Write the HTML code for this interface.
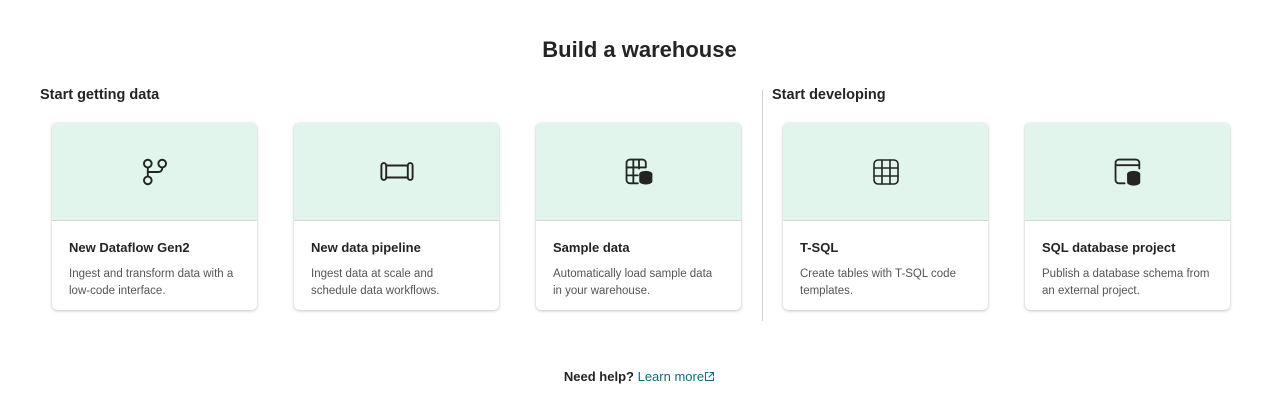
<!DOCTYPE html>
<html><head><meta charset="utf-8"><style>
body{margin:0;width:1279px;height:420px;background:#fff;font-family:"Liberation Sans",sans-serif;color:#242424;position:relative;overflow:hidden}
h1{position:absolute;top:37px;left:0;width:1279px;text-align:center;margin:0;font-size:22px;font-weight:600}
.sec{position:absolute;top:87px;font-size:14.5px;font-weight:600}
.div{position:absolute;left:762px;top:90px;width:1px;height:231px;background:#d1d1d1}
.card{position:absolute;top:123px;width:205px;height:187px;border-radius:5px;background:#fff;box-shadow:0 1px 3px rgba(0,0,0,.22),0 0 1px rgba(0,0,0,.12);overflow:hidden}
.top{height:97px;background:#e2f5ec;border-bottom:1px solid #d6d6d6;display:flex;align-items:center;justify-content:center}
.t{position:absolute;left:17px;top:117px;font-size:13px;font-weight:700}
.d{position:absolute;left:17px;top:143px;font-size:11.5px;line-height:17px;color:#555;width:168px}
.help{position:absolute;top:369px;left:0;width:1279px;text-align:center;font-size:13px;font-weight:600}
.help span{color:#0f6c7c;font-weight:400}
svg{fill:none;stroke:#242424;stroke-width:1.6;stroke-linecap:round;stroke-linejoin:round}
</style></head><body>
<h1>Build a warehouse</h1>
<div class="sec" style="left:40px">Start getting data</div>
<div class="sec" style="left:772px">Start developing</div>
<div class="div"></div>

<div class="card" style="left:52px"><div class="top"><svg width="32" height="36" viewBox="0 0 26 30"><circle cx="7" cy="8" r="3.2"/><circle cx="19" cy="8" r="3.2"/><circle cx="7" cy="22" r="3.2"/><path d="M7 11.2v7.6M7 15h9a3 3 0 0 0 3-3v-0.8"/></svg></div><div class="t">New Dataflow Gen2</div><div class="d">Ingest and transform data with a low-code interface.</div></div>

<div class="card" style="left:294px"><div class="top"><svg width="36" height="29" viewBox="0 0 30 24"><rect x="2" y="5" width="4" height="14" rx="2"/><rect x="24" y="5" width="4" height="14" rx="2"/><path d="M6 7h18M6 17h18"/></svg></div><div class="t">New data pipeline</div><div class="d">Ingest data at scale and schedule data workflows.</div></div>

<div class="card" style="left:536px"><div class="top"><svg width="34" height="34" viewBox="0 0 30 30"><path d="M14 25H7a3 3 0 0 1-3-3V7a3 3 0 0 1 3-3h11a3 3 0 0 1 3 3v4M4 11h17M4 18h10M10 4v21M15 4v8"/><ellipse cx="21" cy="17" rx="5" ry="2.2" fill="#242424"/><path d="M16 17v6c0 1.2 2.2 2.2 5 2.2s5-1 5-2.2v-6" fill="#242424"/></svg></div><div class="t">Sample data</div><div class="d">Automatically load sample data in your warehouse.</div></div>

<div class="card" style="left:783px"><div class="top"><svg width="28" height="28" viewBox="0 0 28 28"><rect x="2" y="2" width="24" height="24" rx="4"/><path d="M10 2v24M18 2v24M2 10h24M2 18h24"/></svg></div><div class="t">T-SQL</div><div class="d">Create tables with T-SQL code templates.</div></div>

<div class="card" style="left:1025px"><div class="top"><svg width="34" height="34" viewBox="0 0 30 30"><path d="M12 25H7a3 3 0 0 1-3-3V7a3 3 0 0 1 3-3h15a3 3 0 0 1 3 3v5M4 9h21"/><ellipse cx="20" cy="17" rx="5" ry="2.2" fill="#242424"/><path d="M15 17v7c0 1.2 2.2 2.2 5 2.2s5-1 5-2.2v-7" fill="#242424"/></svg></div><div class="t">SQL database project</div><div class="d">Publish a database schema from an external project.</div></div>

<div class="help">Need help? <span>Learn more<svg width="11" height="11" viewBox="0 0 11 11" style="stroke:#0f6c7c;stroke-width:1.1;vertical-align:-1px"><path d="M4 1.5H1.5v8h8V7M6 1.5h3.5V5M9.5 1.5 5 6"/></svg></span></div>
</body></html>
